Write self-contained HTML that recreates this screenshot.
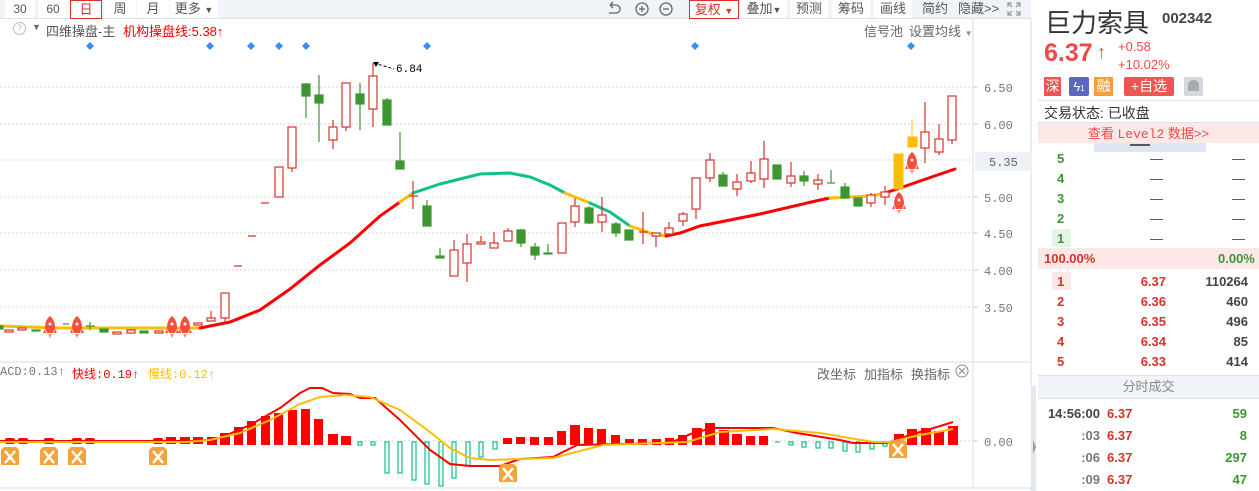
<!DOCTYPE html>
<html><head><meta charset="utf-8">
<style>
*{margin:0;padding:0;box-sizing:border-box}
body{width:1259px;height:491px;overflow:hidden;background:#fff;font-family:"Liberation Sans","Noto Sans CJK SC",sans-serif;position:relative}
.a{position:absolute;white-space:nowrap}
.tb{position:absolute;top:0;height:18px;background:#fff;font-size:12px;color:#555;text-align:center;line-height:18px}
.g{color:#3d9632}.r{color:#d8322a}.k{color:#444}
.rp{font-size:13px;font-weight:bold}
</style></head><body>
<!-- toolbar -->
<div class="a" style="left:0;top:0;width:1031px;height:19px;background:#f0f3f8;border-bottom:1px solid #dde2ea"></div>
<div class="tb" style="left:5px;width:30px">30</div>
<div class="tb" style="left:38px;width:30px">60</div>
<div class="tb" style="left:70px;width:32px;border:1px solid #d8322a;color:#d8322a;height:19px;font-size:13px">日</div>
<div class="tb" style="left:104px;width:32px;font-size:13px">周</div>
<div class="tb" style="left:137px;width:32px;font-size:13px">月</div>
<div class="tb" style="left:170px;width:48px;font-size:13px">更多 <span style="font-size:9px">▼</span></div>
<svg class="a" style="left:605px;top:1px" width="70" height="16" viewBox="0 0 70 16" fill="none" stroke="#666" stroke-width="1.3"><path d="M5 4h6a4 4 0 0 1 0 8H4M5 4l3-3M5 4l3 3"/><circle cx="37" cy="8" r="6"/><path d="M34 8h6M37 5v6"/><circle cx="61" cy="8" r="6"/><path d="M58 8h6"/></svg>
<div class="tb" style="left:689px;width:50px;border:1px solid #d8322a;color:#d8322a;height:19px;font-size:13px">复权 <span style="font-size:9px">▼</span></div>
<div class="tb" style="left:741px;width:46px;font-size:13px">叠加<span style="font-size:9px">▼</span></div>
<div class="tb" style="left:790px;width:38px;font-size:13px">预测</div>
<div class="tb" style="left:832px;width:38px;font-size:13px">筹码</div>
<div class="tb" style="left:874px;width:38px;font-size:13px">画线</div>
<div class="a" style="left:922px;top:0;font-size:13px;color:#555;line-height:18px">简约</div>
<div class="a" style="left:958px;top:0;font-size:13px;color:#555;line-height:18px">隐藏&gt;&gt;</div>
<svg class="a" style="left:1007px;top:2px" width="14" height="14" fill="none" stroke="#999" stroke-width="1.3"><path d="M1 5V1h4M9 1h4v4M13 9v4H9M5 13H1V9M1 1l4 4M13 1l-4 4M13 13l-4-4M1 13l4-4"/></svg>

<!-- header line main chart -->
<div class="a" style="left:13px;top:22px;width:13px;height:13px;border:1px solid #bbb;border-radius:50%;font-size:9px;color:#bbb;text-align:center;line-height:11px">?</div>
<div class="a" style="left:32px;top:22px;font-size:9px;color:#666">▼</div>
<div class="a" style="left:46px;top:21px;font-size:13px;color:#555">四维操盘-主</div>
<div class="a" style="left:123px;top:21px;font-size:13px;color:#e00">机构操盘线:5.38↑</div>
<div class="a" style="left:864px;top:21px;font-size:13px;color:#666">信号池</div>
<div class="a" style="left:909px;top:21px;font-size:13px;color:#666">设置均线 <span style="font-size:8px;color:#a88">▼</span></div>

<svg class="a" style="left:0;top:0" width="1036" height="491">
<line x1="973" y1="19" x2="973" y2="488" stroke="#d8dde5"/>
<line x1="1031" y1="19" x2="1031" y2="491" stroke="#d8dde5"/>
<line x1="0" y1="362" x2="1031" y2="362" stroke="#d8dde5"/>
<line x1="0" y1="488" x2="1031" y2="488" stroke="#d8dde5"/>
<rect x="1031" y="386" width="5" height="105" fill="#e3e7ef"/>
<path d="M1033 440l3 7-3 7z" fill="#999"/>
<rect x="1020" y="386" width="11" height="100" fill="#fff"/>
<g stroke="#d3d7de" stroke-dasharray="2,2">
<line x1="0" y1="87" x2="973" y2="87"/><line x1="0" y1="124" x2="973" y2="124"/><line x1="0" y1="160" x2="973" y2="160"/><line x1="0" y1="197" x2="973" y2="197"/><line x1="0" y1="233" x2="973" y2="233"/><line x1="0" y1="270" x2="973" y2="270"/><line x1="0" y1="307" x2="973" y2="307"/><line x1="0" y1="441" x2="973" y2="441"/>
</g>
<g stroke="#c8ccd4"><path d="M973 87h5M973 124h5M973 197h5M973 233h5M973 270h5M973 307h5M973 441h5"/></g>
<g font-family="Liberation Mono,monospace" font-size="12" fill="#777">
<text x="984" y="92">6.50</text><text x="984" y="129">6.00</text><text x="984" y="202">5.00</text><text x="984" y="238">4.50</text><text x="984" y="275">4.00</text><text x="984" y="312">3.50</text><text x="984" y="446">0.00</text>
</g>
<rect x="975" y="152" width="56" height="19" fill="#eef1f6"/>
<text x="989" y="166" font-family="Liberation Mono,monospace" font-size="12" fill="#666">5.35</text>
<g fill="#3b8cf3"><path d="M90 42l4 4-4 4-4-4zM210 42l4 4-4 4-4-4zM251 42l4 4-4 4-4-4zM279 42l4 4-4 4-4-4zM306 42l4 4-4 4-4-4zM427 42l4 4-4 4-4-4zM695 42l4 4-4 4-4-4zM911 42l4 4-4 4-4-4z"/></g>
<path d="M374 63l20 6" stroke="#000" stroke-dasharray="3,2"/><path d="M373 62l6 0-3 5z" fill="#000"/>
<text x="396" y="72" font-family="Liberation Mono,monospace" font-size="11" fill="#000">6.84</text>
<g fill="none" stroke-width="3" stroke-linecap="round">
<path d="M0 326L60 328L200 328" stroke="#fbbd08"/>
<path d="M200 328L230 322L260 310L290 289L320 265L350 243L380 216L400 202" stroke="#f00"/>
<path d="M400 202L413 193" stroke="#fbbd08"/>
<path d="M413 193L440 184L480 174L510 173L530 177L550 185L565 193" stroke="#0fc08a"/>
<path d="M565 193L590 203" stroke="#fbbd08"/>
<path d="M590 203L610 212L630 226" stroke="#0fc08a"/>
<path d="M630 226L650 233L666 236" stroke="#fbbd08"/>
<path d="M666 236L680 233L700 226L730 220L760 214L790 207L820 200L830 198" stroke="#f00"/>
<path d="M830 198L850 197L870 196L885 193" stroke="#fbbd08"/>
<path d="M885 193L900 188L920 181L955 169" stroke="#f00"/>
</g>
<g stroke="#d8322a" fill="#fff" stroke-width="1.2">
<rect x="5" y="330" width="8" height="2"/><rect x="18" y="328" width="8" height="2"/><rect x="113" y="332" width="8" height="2"/><rect x="127" y="330" width="8" height="3"/><rect x="155" y="331" width="8" height="2"/>
<rect x="194" y="323" width="8" height="2"/><rect x="207" y="318" width="8" height="3"/>
<line x1="211" y1="311" x2="211" y2="318"/><line x1="225" y1="318" x2="225" y2="322"/>
<rect x="221" y="293" width="8" height="25"/>
<path d="M234 266h8M248 236h8M261 203h8"/>
<rect x="275" y="167" width="8" height="30"/>
<rect x="288" y="127" width="8" height="41"/><line x1="292" y1="168" x2="292" y2="172"/>
<line x1="333" y1="120" x2="333" y2="149"/><rect x="329" y="127" width="8" height="13"/>
<line x1="346" y1="127" x2="346" y2="131"/><rect x="342" y="83" width="8" height="44"/>
<line x1="373" y1="63" x2="373" y2="127"/><rect x="369" y="76" width="8" height="33"/>
<line x1="413" y1="181" x2="413" y2="209"/><path d="M409 196h9"/>
<line x1="454" y1="240" x2="454" y2="276"/><rect x="450" y="250" width="8" height="26"/>
<line x1="467" y1="234" x2="467" y2="282"/><rect x="463" y="244" width="8" height="19"/>
<line x1="481" y1="236" x2="481" y2="244"/><rect x="477" y="242" width="8" height="2"/>
<line x1="494" y1="232" x2="494" y2="248"/><rect x="490" y="243" width="8" height="5"/>
<line x1="508" y1="228" x2="508" y2="241"/><rect x="504" y="231" width="8" height="10"/>
<rect x="558" y="223" width="8" height="30"/>
<line x1="575" y1="198" x2="575" y2="227"/><rect x="571" y="206" width="8" height="16"/>
<line x1="602" y1="197" x2="602" y2="232"/><rect x="598" y="215" width="8" height="7"/>
<line x1="643" y1="212" x2="643" y2="244"/><path d="M639 232h9"/>
<line x1="656" y1="233" x2="656" y2="247"/><rect x="652" y="233" width="8" height="3"/>
<line x1="669" y1="222" x2="669" y2="236"/><rect x="665" y="228" width="8" height="6"/>
<line x1="683" y1="212" x2="683" y2="226"/><rect x="679" y="214" width="8" height="7"/>
<line x1="696" y1="209" x2="696" y2="219"/><rect x="692" y="178" width="8" height="31"/>
<line x1="710" y1="153" x2="710" y2="182"/><rect x="706" y="160" width="8" height="18"/>
<line x1="737" y1="174" x2="737" y2="196"/><rect x="733" y="182" width="8" height="7"/>
<line x1="751" y1="161" x2="751" y2="183"/><rect x="747" y="173" width="8" height="8"/>
<line x1="764" y1="141" x2="764" y2="188"/><rect x="760" y="159" width="8" height="20"/>
<line x1="791" y1="162" x2="791" y2="187"/><rect x="787" y="176" width="8" height="7"/>
<line x1="818" y1="174" x2="818" y2="190"/><rect x="814" y="180" width="8" height="4"/>
<line x1="871" y1="193" x2="871" y2="207"/><rect x="867" y="195" width="8" height="8"/>
<line x1="885" y1="186" x2="885" y2="205"/><rect x="881" y="192" width="8" height="5"/>
<line x1="925" y1="102" x2="925" y2="163"/><rect x="921" y="132" width="8" height="16"/>
<line x1="939" y1="124" x2="939" y2="155"/><rect x="935" y="139" width="8" height="13"/>
<line x1="952" y1="140" x2="952" y2="144"/><rect x="948" y="96" width="8" height="44"/>
</g>
<g fill="#3d9632" stroke="#3d9632" stroke-width="1.2">
<rect x="0" y="326" width="3" height="3"/><rect x="32" y="330" width="8" height="1"/><path d="M63 324h6M90 322v8M86 326h9"/>
<rect x="100" y="329" width="8" height="3"/><rect x="140" y="331" width="8" height="2"/>
<line x1="306" y1="83" x2="306" y2="118"/><rect x="302" y="84" width="8" height="12"/>
<line x1="319" y1="75" x2="319" y2="142"/><rect x="315" y="95" width="8" height="8"/>
<line x1="360" y1="83" x2="360" y2="130"/><rect x="356" y="94" width="8" height="10"/>
<line x1="387" y1="98" x2="387" y2="125"/><rect x="383" y="100" width="8" height="25"/>
<line x1="400" y1="132" x2="400" y2="169"/><rect x="396" y="161" width="8" height="8"/>
<line x1="427" y1="200" x2="427" y2="226"/><rect x="423" y="206" width="8" height="20"/>
<line x1="440" y1="248" x2="440" y2="258"/><rect x="436" y="256" width="8" height="2"/>
<line x1="521" y1="229" x2="521" y2="247"/><rect x="517" y="230" width="8" height="13"/>
<line x1="535" y1="243" x2="535" y2="260"/><rect x="531" y="247" width="8" height="8"/>
<line x1="548" y1="244" x2="548" y2="254"/><rect x="544" y="253" width="8" height="1"/>
<line x1="589" y1="206" x2="589" y2="224"/><rect x="585" y="208" width="8" height="15"/>
<line x1="616" y1="222" x2="616" y2="237"/><rect x="612" y="224" width="8" height="9"/>
<rect x="625" y="230" width="8" height="10"/>
<line x1="723" y1="172" x2="723" y2="186"/><rect x="719" y="175" width="8" height="11"/>
<rect x="773" y="165" width="8" height="14"/>
<line x1="804" y1="171" x2="804" y2="186"/><rect x="800" y="176" width="8" height="5"/>
<line x1="831" y1="170" x2="831" y2="183"/><path d="M827 183h8"/>
<line x1="845" y1="183" x2="845" y2="198"/><rect x="841" y="187" width="8" height="11"/>
<rect x="854" y="198" width="8" height="8"/>
</g>
<g fill="#fbbd08" stroke="#fbbd08"><rect x="894" y="154" width="9" height="35"/><line x1="912" y1="120" x2="912" y2="148"/><rect x="908" y="137" width="9" height="10"/></g>
<g id="rk"><path d="M50 316c4 3 5 8 5 12l-2 5h-6l-2-5c0-4 1-9 5-12z" fill="#f44f3c"/><path d="M45 329l-2 4h3zM55 329l2 4h-3z" fill="#f44f3c"/><circle cx="50" cy="324" r="1.5" fill="#fff"/><path d="M48 334l2 4 2-4z" fill="#f88"/></g>
<use href="#rk" x="27"/><use href="#rk" x="122"/><use href="#rk" x="135"/><use href="#rk" x="849" y="-124"/><use href="#rk" x="862" y="-164"/>
<g fill="#f00">
<rect x="5" y="438" width="10" height="6" rx="2"/><rect x="18" y="438" width="10" height="6" rx="2"/><rect x="44" y="438" width="10" height="6" rx="2"/><rect x="72" y="438" width="10" height="6" rx="2"/><rect x="85" y="438" width="10" height="6" rx="2"/>
<rect x="153" y="438" width="10" height="6" rx="2"/><rect x="166" y="437" width="10" height="7"/><rect x="180" y="437" width="10" height="7"/><rect x="193" y="437" width="10" height="7"/><rect x="207" y="437" width="10" height="8"/>
<rect x="220" y="433" width="10" height="12"/><rect x="234" y="427" width="9" height="18"/><rect x="247" y="421" width="9" height="24"/><rect x="261" y="416" width="9" height="29"/><rect x="274" y="413" width="9" height="32"/><rect x="288" y="410" width="9" height="35"/><rect x="301" y="409" width="9" height="36"/><rect x="314" y="419" width="9" height="26"/><rect x="328" y="434" width="10" height="11"/><rect x="341" y="436" width="10" height="9"/>
<rect x="503" y="438" width="9" height="6"/><rect x="516" y="437" width="9" height="7"/><rect x="530" y="437" width="9" height="8"/><rect x="544" y="437" width="9" height="8"/><rect x="557" y="431" width="9" height="14"/><rect x="570" y="425" width="10" height="20"/><rect x="584" y="428" width="9" height="17"/><rect x="597" y="429" width="9" height="16"/><rect x="611" y="435" width="9" height="10"/><rect x="625" y="439" width="9" height="6"/><rect x="638" y="439" width="9" height="6"/><rect x="652" y="439" width="9" height="6"/><rect x="665" y="438" width="9" height="7"/><rect x="678" y="435" width="9" height="10"/><rect x="692" y="428" width="10" height="17"/><rect x="705" y="423" width="10" height="22"/><rect x="719" y="430" width="10" height="15"/><rect x="732" y="434" width="10" height="11"/><rect x="746" y="436" width="9" height="9"/><rect x="759" y="436" width="9" height="9"/>
<rect x="894" y="434" width="10" height="11"/><rect x="907" y="429" width="10" height="16"/><rect x="921" y="428" width="10" height="17"/><rect x="934" y="431" width="10" height="14"/><rect x="948" y="426" width="10" height="19"/>
</g>
<g fill="none" stroke="#0fc08a" stroke-width="1.2">
<rect x="358" y="442" width="4" height="3"/><rect x="371" y="442" width="4" height="3"/><rect x="385" y="442" width="4" height="31"/><rect x="398" y="442" width="4" height="31"/><rect x="412" y="442" width="4" height="38"/><rect x="425" y="442" width="4" height="42"/><rect x="439" y="442" width="4" height="44"/><rect x="452" y="442" width="4" height="36"/><rect x="466" y="442" width="4" height="24"/><rect x="479" y="442" width="4" height="15"/><rect x="493" y="442" width="4" height="7"/>
<path d="M775 442h5"/><rect x="789" y="442" width="4" height="3"/><rect x="802" y="442" width="4" height="5"/><rect x="816" y="442" width="4" height="6"/><rect x="829" y="442" width="4" height="6"/><rect x="843" y="442" width="4" height="9"/><rect x="856" y="442" width="4" height="10"/><rect x="870" y="442" width="4" height="7"/><rect x="883" y="442" width="4" height="4"/>
</g>
<g fill="none" stroke-width="2">
<path d="M0 441L200 441L220 438L250 425L280 408L300 393L310 388L322 388L333 393L350 394L360 398L375 398L400 420L430 450L450 464L470 466L500 466L520 459L553 457L577 445L620 444L670 443L693 433L713 428L773 428L797 433L840 440L853 443L887 443L910 435L937 427L953 422" stroke="#f00"/>
<path d="M0 442L187 442L210 440L240 433L270 420L300 404L320 397L345 395L370 397L400 410L430 432L450 448L470 458L490 460L520 459L553 458L603 445L687 442L720 432L773 429L820 433L873 442L890 442L920 435L953 429" stroke="#fbbd08"/>
</g>
<g id="xt"><path d="M1 450l3-3h12l3 3v15H1z" fill="#f2a43a"/><path d="M5 451l10 12M15 451L5 463" stroke="#fff" stroke-width="2.5"/></g>
<use href="#xt" x="39"/><use href="#xt" x="67"/><use href="#xt" x="148"/><use href="#xt" x="498" y="17"/><use href="#xt" x="888" y="-7"/>
<circle cx="962" cy="371" r="6" fill="none" stroke="#888"/><path d="M959 368l6 6M965 368l-6 6" stroke="#888"/>
</svg>
<div class="a" style="left:0;top:365px;font-size:12px;color:#777;font-family:'Liberation Mono','Noto Sans CJK SC',monospace">ACD:0.13↑</div>
<div class="a" style="left:72px;top:365px;font-size:12px;color:#e00;font-family:'Liberation Mono','Noto Sans CJK SC',monospace">快线:0.19↑</div>
<div class="a" style="left:148px;top:365px;font-size:12px;color:#fbbd08;font-family:'Liberation Mono','Noto Sans CJK SC',monospace">慢线:0.12↑</div>
<div class="a" style="left:817px;top:364px;font-size:13px;color:#666">改坐标</div>
<div class="a" style="left:864px;top:364px;font-size:13px;color:#666">加指标</div>
<div class="a" style="left:911px;top:364px;font-size:13px;color:#666">换指标</div>

<!-- right panel -->
<div class="a" style="left:1045px;top:3px;font-size:26px;color:#333">巨力索具</div>
<div class="a" style="left:1162px;top:10px;font-size:15px;font-weight:bold;color:#444">002342</div>
<div class="a" style="left:1044px;top:39px;font-size:25px;font-weight:bold;color:#f04848">6.37</div>
<div class="a" style="left:1097px;top:42px;font-size:18px;font-weight:bold;color:#f04848">↑</div>
<div class="a" style="left:1118px;top:38px;font-size:13px;color:#f04848;line-height:18px">+0.58<br>+10.02%</div>
<div class="a" style="left:1044px;top:77px;width:17px;height:19px;background:#f05555;color:#fff;font-size:14px;text-align:center;line-height:19px">深</div>
<div class="a" style="left:1069px;top:77px;width:20px;height:19px;background:#5a68c4;color:#fff;font-size:13px;text-align:center;line-height:19px;border-radius:2px">ϟ<span style="font-size:8px">1</span></div>
<div class="a" style="left:1094px;top:77px;width:19px;height:19px;background:#f79d3c;color:#fff;font-size:14px;text-align:center;line-height:19px">融</div>
<div class="a" style="left:1124px;top:77px;width:50px;height:19px;background:#f05555;color:#fff;font-size:14px;text-align:center;line-height:19px;border-radius:2px">+自选</div>
<div class="a" style="left:1184px;top:77px;width:19px;height:19px;background:#d5d8de;border-radius:2px"></div>
<div class="a" style="left:1188px;top:80px;width:11px;height:11px;background:#aaa;border-radius:5px 5px 1px 1px"></div>
<div class="a" style="left:1038px;top:100px;width:221px;border-top:1px solid #dde2ea"></div>
<div class="a" style="left:1044px;top:103px;font-size:14px;color:#333">交易状态: 已收盘</div>
<div class="a" style="left:1038px;top:122px;width:221px;height:21px;background:#fde8e8;border-top:1px solid #dde2ea;text-align:center;font-size:13px;color:#f04848;line-height:21px">查看 <span style="font-family:'Liberation Mono',monospace">Level2</span> 数据&gt;&gt;</div>
<div class="a" style="left:1094px;top:143px;width:112px;height:9px;background:#dfe5f2"></div>
<div class="a" style="left:1130px;top:144px;width:20px;height:2px;background:#555"></div>
<div class="a" style="left:1052px;top:229px;width:19px;height:18px;background:#e3f5e3"></div>
<div class="a g rp" style="left:1057px;top:149px;line-height:20px">5<br>4<br>3<br>2<br>1</div>
<div class="a" style="left:1150px;top:149px;line-height:20px;color:#444;font-size:13px">—<br>—<br>—<br>—<br>—</div>
<div class="a" style="left:1232px;top:149px;line-height:20px;color:#444;font-size:13px">—<br>—<br>—<br>—<br>—</div>
<div class="a" style="left:1038px;top:248px;width:221px;height:21px;background:#fde8e8"></div>
<div class="a r rp" style="left:1044px;top:251px">100.00%</div>
<div class="a g rp" style="left:1218px;top:251px">0.00%</div>
<div class="a" style="left:1052px;top:272px;width:19px;height:18px;background:#fde8e8"></div>
<div class="a r rp" style="left:1057px;top:272px;line-height:20px">1<br>2<br>3<br>4<br>5</div>
<div class="a r rp" style="left:1120px;top:272px;width:46px;text-align:right;line-height:20px">6.37<br>6.36<br>6.35<br>6.34<br>6.33</div>
<div class="a k rp" style="left:1180px;top:272px;width:68px;text-align:right;line-height:20px">110264<br>460<br>496<br>85<br>414</div>
<div class="a" style="left:1038px;top:375px;width:221px;height:24px;background:#f0f3f8;border-top:1px solid #dde2ea;border-bottom:1px solid #dde2ea;text-align:center;font-size:13px;color:#888;line-height:22px">分时成交</div>
<div class="a k rp" style="left:1040px;top:403px;width:60px;text-align:right;line-height:22px">14:56:00<br><span style="color:#777">:03</span><br><span style="color:#777">:06</span><br><span style="color:#777">:09</span></div>
<div class="a r rp" style="left:1107px;top:403px;line-height:22px">6.37<br>6.37<br>6.37<br>6.37</div>
<div class="a g rp" style="left:1200px;top:403px;width:47px;text-align:right;line-height:22px">59<br>8<br>297<br>47</div>
</body></html>
